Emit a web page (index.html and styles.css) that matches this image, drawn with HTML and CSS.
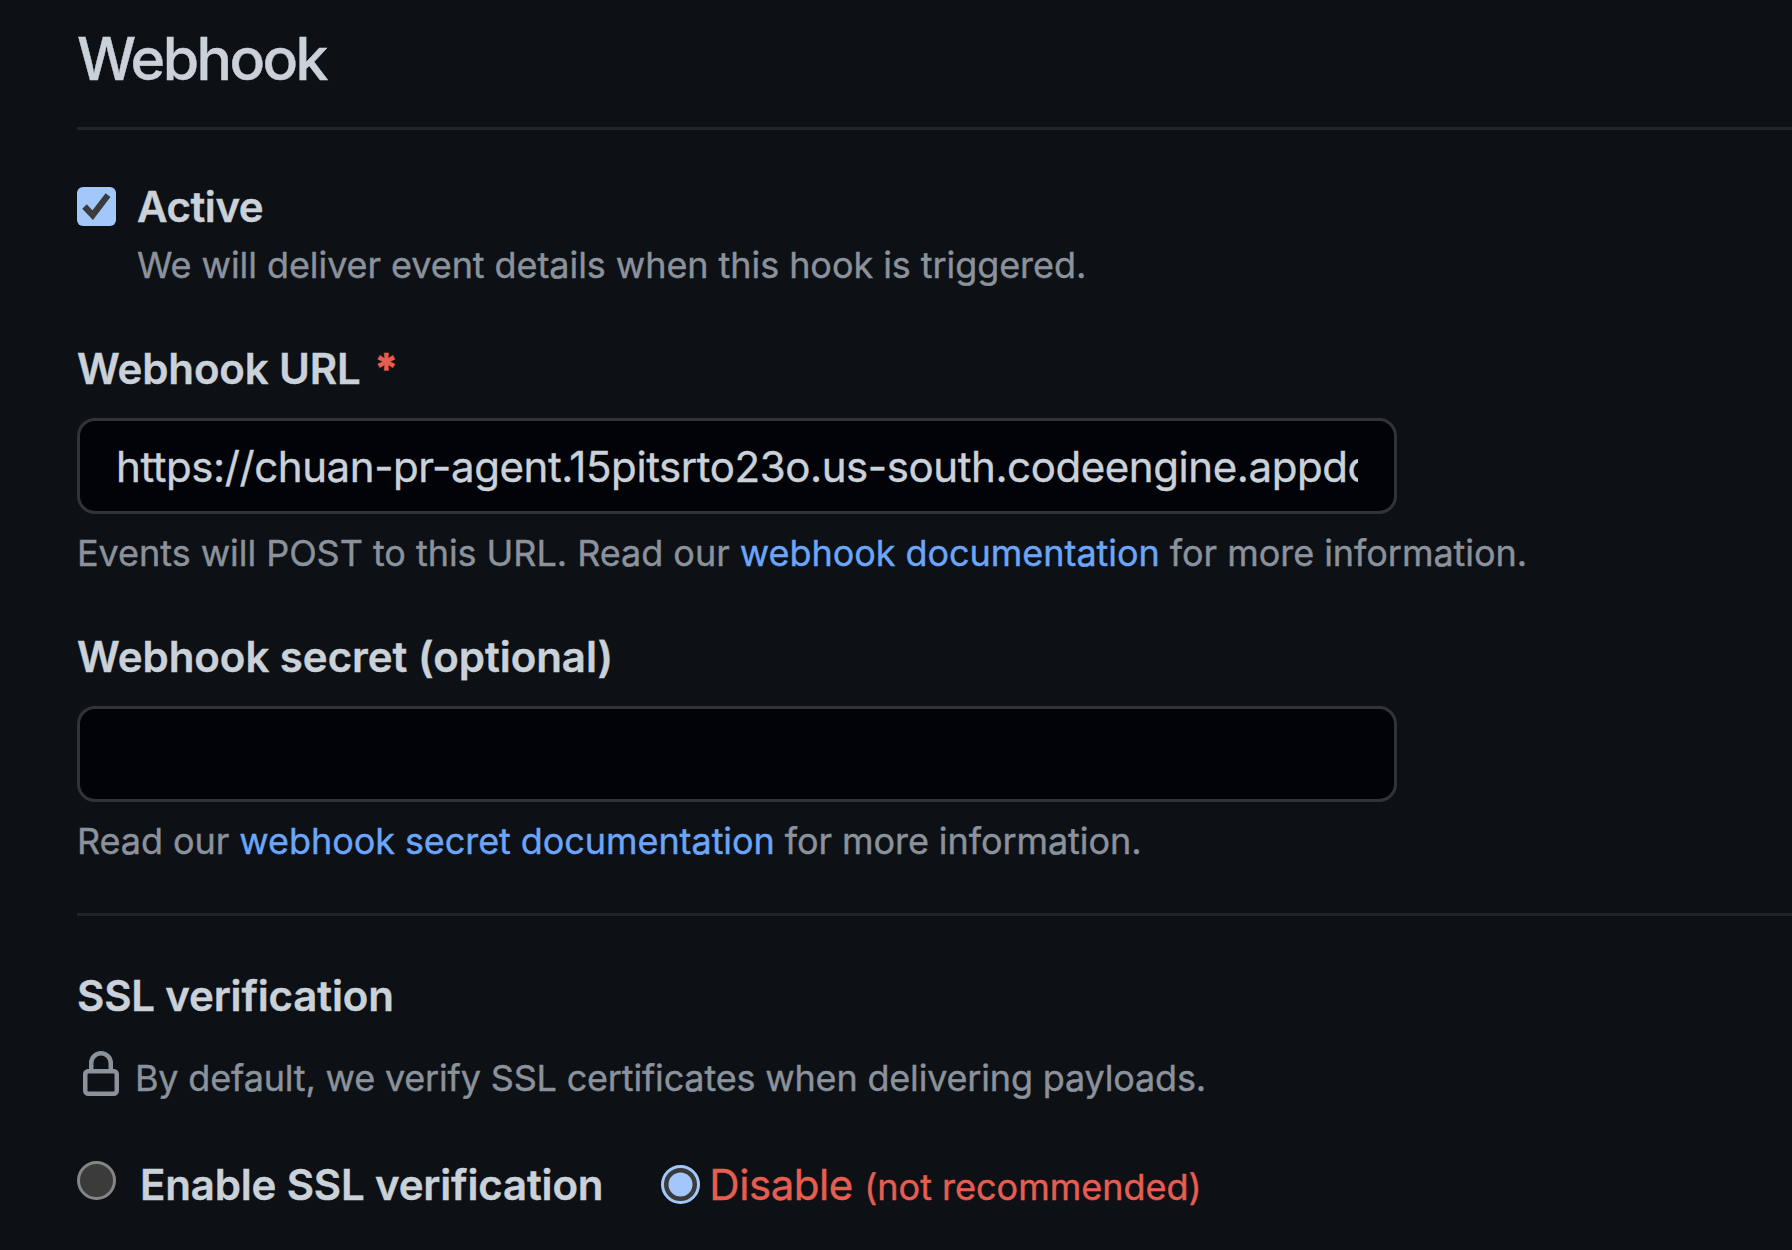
FILE: index.html
```
<!DOCTYPE html>
<html lang="en">
<head>
<meta charset="utf-8">
<title>Webhook</title>
<link rel="stylesheet" href="styles.css">
</head>
<body>
<main class="settings">
  <h2 class="title">Webhook</h2>
  <section class="active">
    <svg class="checkbox" viewBox="0 0 39 39" role="img" aria-label="Checked">
      <rect width="39" height="39" rx="6" fill="#a2c8fa"/>
      <path d="M7.500 19.500L15.700 28.200L31 8.200" fill="none" stroke="#3b3b3b" stroke-width="6.200"/>
    </svg>
    <div class="active-text">
      <div class="label label-active">Active</div>
      <p class="note">We will deliver event details when this hook is triggered.</p>
    </div>
  </section>
  <section class="field">
    <div class="label label-url">Webhook URL <span class="required">*</span></div>
    <div class="input"><span class="input-value">https://chuan-pr-agent.15pitsrto23o.us-south.codeengine.appdomain.cloud</span></div>
    <p class="note note-url">Events will POST to this URL. Read our <a class="link">webhook documentation</a> for more information.</p>
  </section>
  <section class="field">
    <div class="label">Webhook secret (optional)</div>
    <div class="input"></div>
    <p class="note">Read our <a class="link">webhook secret documentation</a> for more information.</p>
  </section>
  <section class="ssl">
    <h3 class="label label-ssl">SSL verification</h3>
    <div class="ssl-note">
      <svg class="lock" viewBox="0 0 16 16" aria-hidden="true"><path fill="currentColor" d="M4 4a4 4 0 0 1 8 0v2h.25c.966 0 1.75.784 1.75 1.75v5.5A1.75 1.75 0 0 1 12.25 15h-8.5A1.75 1.75 0 0 1 2 13.250v-5.500C2 6.784 2.784 6 3.750 6H4Zm8.250 3.500h-8.500a.25.25 0 0 0-.25.25v5.500c0 .138.112.25.25.25h8.500a.25.25 0 0 0 .25-.25v-5.500a.25.25 0 0 0-.25-.25ZM10.500 6V4a2.500 2.500 0 1 0-5 0v2Z"/></svg>
      <p class="note note-ssl">By default, we verify SSL certificates when delivering payloads.</p>
    </div>
    <div class="choices">
      <div class="choice choice-enable">
        <svg class="radio" viewBox="0 0 39 39" role="img" aria-label="Not selected">
          <circle cx="19.5" cy="19.5" r="18" fill="#3b3b3b" stroke="#858585" stroke-width="3"/>
        </svg>
        <span class="label label-ssl">Enable SSL verification</span>
      </div>
      <div class="choice choice-disable">
        <svg class="radio" viewBox="0 0 39 39" role="img" aria-label="Selected">
          <circle cx="19.5" cy="19.5" r="18" fill="#3b3b3b" stroke="#a2c8fa" stroke-width="3"/>
          <circle cx="19.5" cy="19.5" r="12" fill="#a2c8fa"/>
        </svg>
        <span class="danger">Disable <small class="danger-hint">(not recommended)</small></span>
      </div>
    </div>
  </section>
</main>
</body>
</html>
```
FILE: styles.css
```
body {
  margin: 0;
  background: #0d1116;
  color: #cad1d9;
  font-family: Inter, sans-serif;
  overflow: hidden;
  -webkit-text-stroke: 0.4px currentColor;
}

.settings {
  padding: 13px 0 0 77px;
}

.title {
  margin: 0;
  height: 114px;
  border-bottom: 3px solid #212429;
  font-size: 59px;
  font-weight: 450;
  line-height: 91px;
  letter-spacing: -2.6px;
}

.label {
  margin: 0;
  font-size: 42px;
  font-weight: 600;
  line-height: 63px;
  letter-spacing: -0.04px;
  white-space: nowrap;
}

.label-active { letter-spacing: -0.45px; }
.label-url { letter-spacing: -0.15px; }
.label-ssl { letter-spacing: -0.17px; }

.note {
  margin: 0;
  color: #8b929c;
  font-size: 36px;
  line-height: 54px;
  letter-spacing: -0.07px;
  white-space: nowrap;
}

.note-url { letter-spacing: -0.045px; }
.note-ssl { letter-spacing: -0.18px; }

.active {
  display: flex;
  gap: 21px;
  margin-top: 45px;
}

.checkbox {
  width: 39px;
  height: 39px;
  margin-top: 12px;
}

.field {
  margin-top: 45px;
}

.input {
  box-sizing: border-box;
  width: 1320px;
  height: 96px;
  margin: 18px 0 12px;
  padding: 0 36px;
  border: 3px solid #303339;
  border-radius: 18px;
  background: #010308;
}

.input-value {
  display: block;
  overflow: hidden;
  font-size: 42px;
  line-height: 91px;
  letter-spacing: -0.42px;
  white-space: nowrap;
}

.required {
  margin-left: 3px;
  color: #e75e50;
  font-weight: 800;
}

.link { color: #6ba6fa; }

.ssl {
  margin-top: 45px;
  padding-top: 48px;
  border-top: 3px solid #212429;
}

.ssl-note {
  display: flex;
  gap: 10px;
  margin-top: 24px;
  color: #8b929c;
}

.lock {
  width: 48px;
  height: 48px;
}

.choices {
  display: flex;
  gap: 58px;
  margin-top: 48px;
}

.choice {
  display: flex;
  align-items: flex-start;
}

.choice-enable { gap: 24px; }
.choice-disable { gap: 9px; }

.radio {
  width: 39px;
  height: 39px;
  flex: none;
}

.choice-enable .radio { margin-top: 8px; }
.choice-disable .radio { margin-top: 12px; }

.danger {
  color: #e75e50;
  font-size: 42px;
  line-height: 63px;
  letter-spacing: -0.45px;
  white-space: nowrap;
}

.danger-hint {
  font-size: 36px;
  letter-spacing: 0;
}
```
